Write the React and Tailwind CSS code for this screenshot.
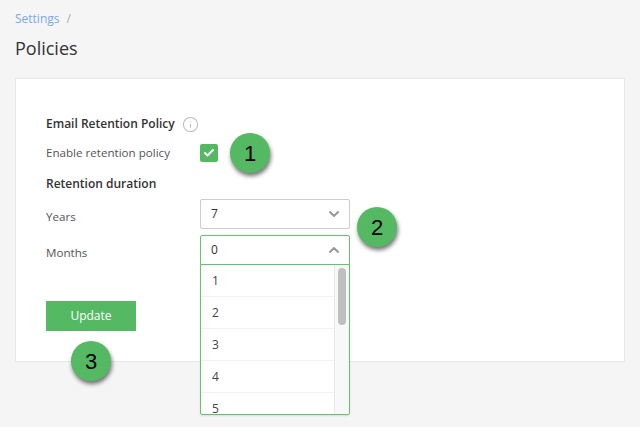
import { Check, ChevronDown, ChevronUp, Info } from "lucide-react";

function Callout({ label, className }) {
  return (
    <div
      className={
        "absolute w-10 h-10 rounded-full bg-[#55b963] flex items-center justify-center text-[22px] text-black shadow-[1px_3px_4px_rgba(0,0,0,0.55)] font-['Liberation_Sans',sans-serif] " +
        className
      }
    >
      {label}
    </div>
  );
}

export default function App() {
  const options = ["1", "2", "3", "4", "5"];
  return (
    <div className="relative h-[427px] w-[640px] overflow-hidden bg-[#f5f5f5] px-[15px] pt-[10px] font-['Open_Sans',sans-serif] text-[#333]">
      <div className="flex gap-[7px] text-[12px] leading-[18px]">
        <span className="text-[#7aa7f5]">Settings</span>
        <span className="text-[#aaa]">/</span>
      </div>
      <h1 className="mt-[7px] text-[18px] leading-[26px]">Policies</h1>

      <div className="relative mt-[17px] h-[284px] w-[610px] border border-[#e6e6e6] bg-white pl-[30px] pt-[36px]">
        <div className="flex h-[18px] items-center gap-[7px] text-[12px] font-semibold">
          Email Retention Policy
          <Info size={17} strokeWidth={1.5} className="text-[#bbb]" />
        </div>
        <div className="mt-[11px] flex h-[18px] items-center text-[11.6px] text-[#555]">
          <span className="w-[154px]">Enable retention policy</span>
          <span className="flex h-[18px] w-[18px] items-center justify-center rounded-[2px] bg-[#55b963]">
            <Check size={12} strokeWidth={4} className="text-white" />
          </span>
        </div>
        <div className="mt-[13px] h-[18px] text-[12px] font-semibold leading-[18px]">
          Retention duration
        </div>
        <div className="mt-[6px] flex items-start text-[11.6px] text-[#555]">
          <span className="w-[154px] pt-[9px] leading-[18px]">Years</span>
          <div className="flex h-[30px] w-[150px] items-center justify-between rounded-[2px] border border-[#ccc] pl-[10px] pr-[7px] text-[12px] text-[#333]">
            7
            <ChevronDown size={16} strokeWidth={3} className="text-[#999]" />
          </div>
        </div>
        <div className="mt-[6px] flex items-start text-[11.6px] text-[#555]">
          <span className="w-[154px] pt-[9px] leading-[18px]">Months</span>
          <div className="flex h-[30px] w-[150px] items-center justify-between rounded-t-[2px] border border-[#5ec66d] pl-[10px] pr-[7px] text-[12px] text-[#333]">
            0
            <ChevronUp size={16} strokeWidth={3} className="text-[#999]" />
          </div>
        </div>
        <button className="mt-[36px] block h-[30px] w-[90px] bg-[#55b963] text-[12px] font-medium text-white">
          Update
        </button>
      </div>

      <div className="absolute left-[200px] top-[264px] flex h-[151px] w-[150px] overflow-hidden rounded-b-[2px] border border-[#5ec66d] bg-white text-[12px] shadow-[0_1px_2px_rgba(0,0,0,0.1)]">
        <div className="flex-1">
          {options.map((o) => (
            <div
              key={o}
              className="flex h-[32px] items-center border-b border-[#f2f2f2] pl-[11px] text-[#444]"
            >
              {o}
            </div>
          ))}
        </div>
        <div className="w-[15px] border-l border-[#e8e8e8] bg-[#f8f8f8] pl-[3px] pt-[3px]">
          <div className="h-[57px] w-[8px] rounded-[4px] bg-[#bfbfbf]" />
        </div>
      </div>

      <Callout label="1" className="left-[230px] top-[133px]" />
      <Callout label="2" className="left-[357px] top-[207px]" />
      <Callout label="3" className="left-[71px] top-[341px]" />
    </div>
  );
}
